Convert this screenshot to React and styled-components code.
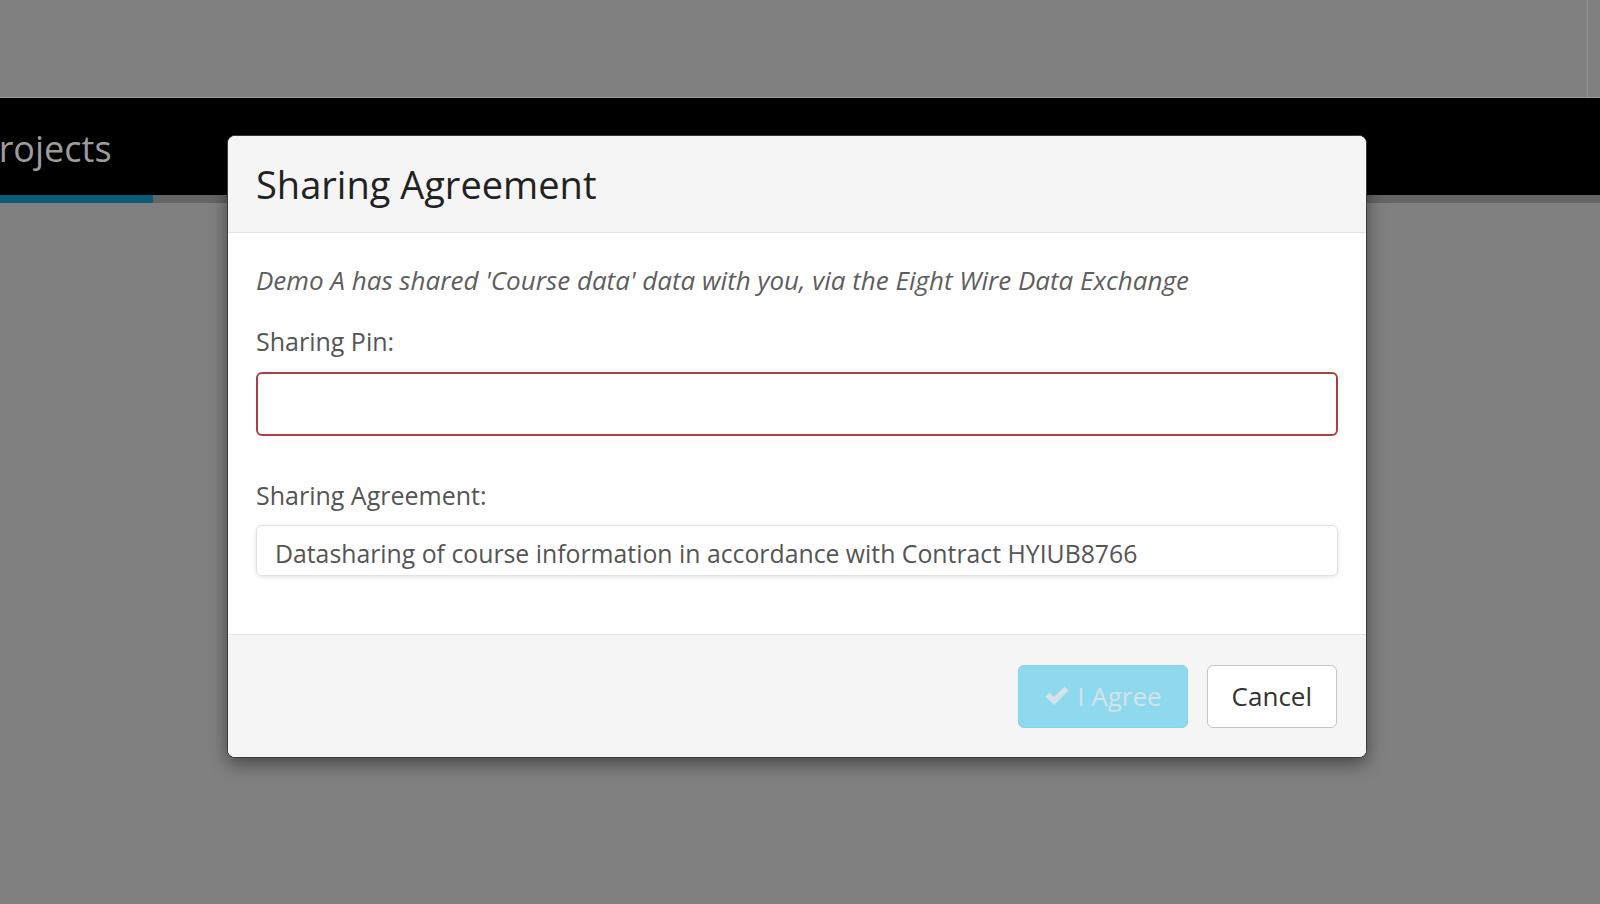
import React, { useState } from 'react';
import styled, { createGlobalStyle } from 'styled-components';

const GlobalStyle = createGlobalStyle`
  html, body {
    margin: 0;
    padding: 0;
    background: #808080;
    font-family: 'Open Sans', 'Noto Sans', sans-serif;
    overflow: hidden;
  }
  * { box-sizing: border-box; }
`;

const Page = styled.div`
  position: relative;
  width: 1600px;
  height: 904px;
  background: #808080;
  display: flex;
  flex-direction: column;
`;

const TopArea = styled.div`
  height: 98px;
  display: flex;
  justify-content: flex-end;
  border-bottom: 1px solid #9a9a9a;
`;

const ScrollEdge = styled.div`
  width: 13px;
  border-left: 1px solid #959595;
`;

const NavBar = styled.div`
  height: 97px;
  background: #000;
  display: flex;
  align-items: center;
  overflow: hidden;
`;

const NavTitle = styled.span`
  margin-left: -23px;
  margin-top: 4px;
  font-size: 36px;
  color: #9c9c9c;
  white-space: nowrap;
`;

const TabStrip = styled.div`
  height: 8px;
  background: #656565;
  display: flex;
`;

const ActiveTab = styled.div`
  width: 153px;
  background: #0b5a78;
`;

const Modal = styled.div`
  position: absolute;
  left: 227px;
  top: 135px;
  width: 1140px;
  background: #fff;
  border: 1px solid #3a3a3a;
  border-radius: 8px;
  box-shadow: 0 6px 18px rgba(0, 0, 0, 0.45);
  overflow: hidden;
  display: flex;
  flex-direction: column;
`;

const Header = styled.div`
  height: 97px;
  background: #f5f5f5;
  border-bottom: 1px solid #e3e3e3;
  display: flex;
  align-items: center;
  padding: 0 28px 0;
`;

const Title = styled.h4`
  margin: 0;
  font-size: 38px;
  font-weight: 400;
  color: #222;
`;

const Body = styled.div`
  padding: 30px 28px 58px;
  display: flex;
  flex-direction: column;
`;

const Intro = styled.p`
  margin: 0 0 27px;
  font-size: 26px;
  line-height: 34px;
  font-style: italic;
  color: #5e5e5e;
`;

const Label = styled.label`
  display: block;
  font-size: 25px;
  line-height: 34px;
  color: #555;
  margin-bottom: ${props => props.gap || 14}px;
`;

const FieldGroup = styled.div`
  margin-bottom: ${props => props.spacing || 0}px;
`;

const PinInput = styled.input`
  display: block;
  width: 100%;
  height: 64px;
  padding: 0 18px;
  font-family: inherit;
  font-size: 25px;
  color: #555;
  background: #fff;
  border: 2px solid #ad3f3f;
  border-radius: 6px;
  outline: none;
`;

const AgreementBox = styled.div`
  height: 51px;
  padding: 5px 18px 0;
  display: flex;
  align-items: center;
  font-size: 24.8px;
  color: #555;
  background: #fff;
  border: 1px solid #e2e2e2;
  border-radius: 6px;
  box-shadow: 0 1px 4px rgba(0, 0, 0, 0.12);
`;

const Footer = styled.div`
  height: 123px;
  background: #f5f5f5;
  border-top: 1px solid #e3e3e3;
  display: flex;
  justify-content: flex-end;
  align-items: center;
  gap: 19px;
  padding: 0 29px 0;
`;

const Button = styled.button`
  height: 63px;
  padding: 0 ${props => (props.primary ? 25 : 24)}px;
  font-family: inherit;
  font-size: 26px;
  border-radius: 6px;
  display: flex;
  align-items: center;
  gap: 7px;
  cursor: ${props => (props.disabled ? 'not-allowed' : 'pointer')};
  background: ${props => (props.primary ? '#8fd9ef' : '#fff')};
  color: ${props => (props.primary ? '#d4e3e8' : '#333')};
  border: 1px solid ${props => (props.primary ? '#86d3ea' : '#c4c4c4')};
`;

const CheckIcon = () => (
  <svg width="26" height="22" viewBox="0 0 26 22" aria-hidden="true">
    <path d="M1.5 11.5 L5.5 7.5 L10 12 L20.5 1.5 L24.5 5.5 L10 20 Z" fill="#d4e3e8" />
  </svg>
);

export default function App() {
  const [pin, setPin] = useState('');

  return (
    <Page>
      <GlobalStyle />
      <TopArea>
        <ScrollEdge />
      </TopArea>
      <NavBar>
        <NavTitle>Projects</NavTitle>
      </NavBar>
      <TabStrip>
        <ActiveTab />
      </TabStrip>

      <Modal role="dialog">
        <Header>
          <Title>Sharing Agreement</Title>
        </Header>
        <Body>
          <Intro>
            Demo A has shared 'Course data' data with you, via the Eight Wire Data Exchange
          </Intro>
          <FieldGroup spacing={42}>
            <Label>Sharing Pin:</Label>
            <PinInput value={pin} onChange={e => setPin(e.target.value)} />
          </FieldGroup>
          <FieldGroup>
            <Label gap={13}>Sharing Agreement:</Label>
            <AgreementBox>
              Datasharing of course information in accordance with Contract HYIUB8766
            </AgreementBox>
          </FieldGroup>
        </Body>
        <Footer>
          <Button primary disabled>
            <CheckIcon />I Agree
          </Button>
          <Button>Cancel</Button>
        </Footer>
      </Modal>
    </Page>
  );
}
